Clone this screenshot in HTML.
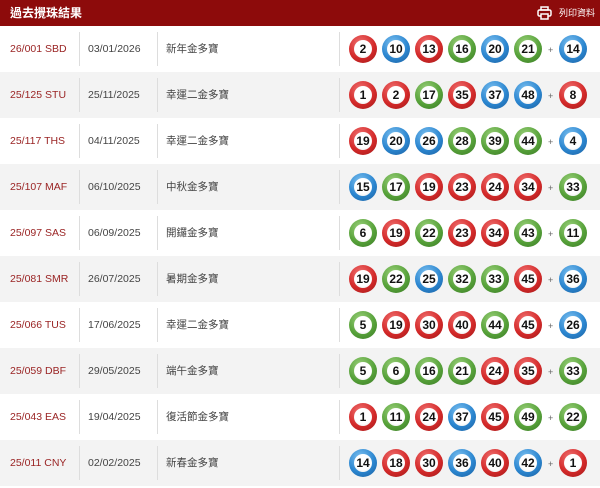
<!DOCTYPE html>
<html><head><meta charset="utf-8"><style>
*{margin:0;padding:0;box-sizing:border-box}
body{width:600px;height:487px;overflow:hidden;background:#fff;font-family:"Liberation Sans","Noto Sans CJK TC",sans-serif;}
.hd{height:26px;background:#8d0b0b;color:#fff;position:relative}
.hd .t{position:absolute;left:10px;top:0;line-height:26px;font-size:12px;font-weight:bold}
.hd .p{position:absolute;left:559px;top:0;line-height:26px;font-size:9px}
.hd svg{position:absolute;left:537px;top:6px}
.row{height:46px;position:relative;font-size:10.5px;color:#444}
.row span{position:absolute;top:0;line-height:46px}
.id{left:10px;color:#9a2424}
.dt{left:88px}
.nm{left:166px}
.d{position:absolute;top:6px;width:1px;height:34px;background:#ddd}
.b{position:absolute;top:9px;width:28px;height:28px;border-radius:50%;}
.b i{position:absolute;left:5px;top:5px;width:18px;height:18px;border-radius:50%;background:radial-gradient(circle at 50% 40%,#fff 60%,#ddd);font-style:normal;font-weight:bold;font-size:12px;color:#111;text-align:center;line-height:18px}
.r{background:radial-gradient(circle at 40% 30%,#f07070,#d42a2a 55%,#a01818)}
.bl{background:radial-gradient(circle at 40% 30%,#7cc0f0,#2b86d0 55%,#1b5f9e)}
.g{background:radial-gradient(circle at 40% 30%,#9ad07a,#57a23a 55%,#3a7a25)}
.row .pl{left:548px;font-size:9px;color:#666;line-height:48px}
</style></head><body>
<div class="hd"><span class="t">過去攪珠結果</span>
<svg width="15" height="14" viewBox="0 0 15 14"><rect x="4" y="1" width="7" height="3" fill="none" stroke="#fff" stroke-width="1.5"/><rect x="1" y="4" width="13" height="6" rx="1.5" fill="none" stroke="#fff" stroke-width="1.5"/><rect x="4" y="8" width="7" height="5" fill="#8d0b0b" stroke="#fff" stroke-width="1.5"/></svg>
<span class="p">列印資料</span></div>
<div id="rows">
<div class="row" style="background:#fff"><span class="id">26/001 SBD</span><span class="dt">03/01/2026</span><span class="nm">新年金多寶</span><div class="d" style="left:79px"></div><div class="d" style="left:157px"></div><div class="d" style="left:339px"></div>
<div class="b r" style="left:349px"><i>2</i></div><div class="b bl" style="left:382px"><i>10</i></div><div class="b r" style="left:415px"><i>13</i></div><div class="b g" style="left:448px"><i>16</i></div><div class="b bl" style="left:481px"><i>20</i></div><div class="b g" style="left:514px"><i>21</i></div><span class="pl">+</span><div class="b bl" style="left:559px"><i>14</i></div></div>
<div class="row" style="background:#f3f3f3"><span class="id">25/125 STU</span><span class="dt">25/11/2025</span><span class="nm">幸運二金多寶</span><div class="d" style="left:79px"></div><div class="d" style="left:157px"></div><div class="d" style="left:339px"></div>
<div class="b r" style="left:349px"><i>1</i></div><div class="b r" style="left:382px"><i>2</i></div><div class="b g" style="left:415px"><i>17</i></div><div class="b r" style="left:448px"><i>35</i></div><div class="b bl" style="left:481px"><i>37</i></div><div class="b bl" style="left:514px"><i>48</i></div><span class="pl">+</span><div class="b r" style="left:559px"><i>8</i></div></div>
<div class="row" style="background:#fff"><span class="id">25/117 THS</span><span class="dt">04/11/2025</span><span class="nm">幸運二金多寶</span><div class="d" style="left:79px"></div><div class="d" style="left:157px"></div><div class="d" style="left:339px"></div>
<div class="b r" style="left:349px"><i>19</i></div><div class="b bl" style="left:382px"><i>20</i></div><div class="b bl" style="left:415px"><i>26</i></div><div class="b g" style="left:448px"><i>28</i></div><div class="b g" style="left:481px"><i>39</i></div><div class="b g" style="left:514px"><i>44</i></div><span class="pl">+</span><div class="b bl" style="left:559px"><i>4</i></div></div>
<div class="row" style="background:#f3f3f3"><span class="id">25/107 MAF</span><span class="dt">06/10/2025</span><span class="nm">中秋金多寶</span><div class="d" style="left:79px"></div><div class="d" style="left:157px"></div><div class="d" style="left:339px"></div>
<div class="b bl" style="left:349px"><i>15</i></div><div class="b g" style="left:382px"><i>17</i></div><div class="b r" style="left:415px"><i>19</i></div><div class="b r" style="left:448px"><i>23</i></div><div class="b r" style="left:481px"><i>24</i></div><div class="b r" style="left:514px"><i>34</i></div><span class="pl">+</span><div class="b g" style="left:559px"><i>33</i></div></div>
<div class="row" style="background:#fff"><span class="id">25/097 SAS</span><span class="dt">06/09/2025</span><span class="nm">開鑼金多寶</span><div class="d" style="left:79px"></div><div class="d" style="left:157px"></div><div class="d" style="left:339px"></div>
<div class="b g" style="left:349px"><i>6</i></div><div class="b r" style="left:382px"><i>19</i></div><div class="b g" style="left:415px"><i>22</i></div><div class="b r" style="left:448px"><i>23</i></div><div class="b r" style="left:481px"><i>34</i></div><div class="b g" style="left:514px"><i>43</i></div><span class="pl">+</span><div class="b g" style="left:559px"><i>11</i></div></div>
<div class="row" style="background:#f3f3f3"><span class="id">25/081 SMR</span><span class="dt">26/07/2025</span><span class="nm">暑期金多寶</span><div class="d" style="left:79px"></div><div class="d" style="left:157px"></div><div class="d" style="left:339px"></div>
<div class="b r" style="left:349px"><i>19</i></div><div class="b g" style="left:382px"><i>22</i></div><div class="b bl" style="left:415px"><i>25</i></div><div class="b g" style="left:448px"><i>32</i></div><div class="b g" style="left:481px"><i>33</i></div><div class="b r" style="left:514px"><i>45</i></div><span class="pl">+</span><div class="b bl" style="left:559px"><i>36</i></div></div>
<div class="row" style="background:#fff"><span class="id">25/066 TUS</span><span class="dt">17/06/2025</span><span class="nm">幸運二金多寶</span><div class="d" style="left:79px"></div><div class="d" style="left:157px"></div><div class="d" style="left:339px"></div>
<div class="b g" style="left:349px"><i>5</i></div><div class="b r" style="left:382px"><i>19</i></div><div class="b r" style="left:415px"><i>30</i></div><div class="b r" style="left:448px"><i>40</i></div><div class="b g" style="left:481px"><i>44</i></div><div class="b r" style="left:514px"><i>45</i></div><span class="pl">+</span><div class="b bl" style="left:559px"><i>26</i></div></div>
<div class="row" style="background:#f3f3f3"><span class="id">25/059 DBF</span><span class="dt">29/05/2025</span><span class="nm">端午金多寶</span><div class="d" style="left:79px"></div><div class="d" style="left:157px"></div><div class="d" style="left:339px"></div>
<div class="b g" style="left:349px"><i>5</i></div><div class="b g" style="left:382px"><i>6</i></div><div class="b g" style="left:415px"><i>16</i></div><div class="b g" style="left:448px"><i>21</i></div><div class="b r" style="left:481px"><i>24</i></div><div class="b r" style="left:514px"><i>35</i></div><span class="pl">+</span><div class="b g" style="left:559px"><i>33</i></div></div>
<div class="row" style="background:#fff"><span class="id">25/043 EAS</span><span class="dt">19/04/2025</span><span class="nm">復活節金多寶</span><div class="d" style="left:79px"></div><div class="d" style="left:157px"></div><div class="d" style="left:339px"></div>
<div class="b r" style="left:349px"><i>1</i></div><div class="b g" style="left:382px"><i>11</i></div><div class="b r" style="left:415px"><i>24</i></div><div class="b bl" style="left:448px"><i>37</i></div><div class="b r" style="left:481px"><i>45</i></div><div class="b g" style="left:514px"><i>49</i></div><span class="pl">+</span><div class="b g" style="left:559px"><i>22</i></div></div>
<div class="row" style="background:#f3f3f3"><span class="id">25/011 CNY</span><span class="dt">02/02/2025</span><span class="nm">新春金多寶</span><div class="d" style="left:79px"></div><div class="d" style="left:157px"></div><div class="d" style="left:339px"></div>
<div class="b bl" style="left:349px"><i>14</i></div><div class="b r" style="left:382px"><i>18</i></div><div class="b r" style="left:415px"><i>30</i></div><div class="b bl" style="left:448px"><i>36</i></div><div class="b r" style="left:481px"><i>40</i></div><div class="b bl" style="left:514px"><i>42</i></div><span class="pl">+</span><div class="b r" style="left:559px"><i>1</i></div></div>
</div>
</body></html>
